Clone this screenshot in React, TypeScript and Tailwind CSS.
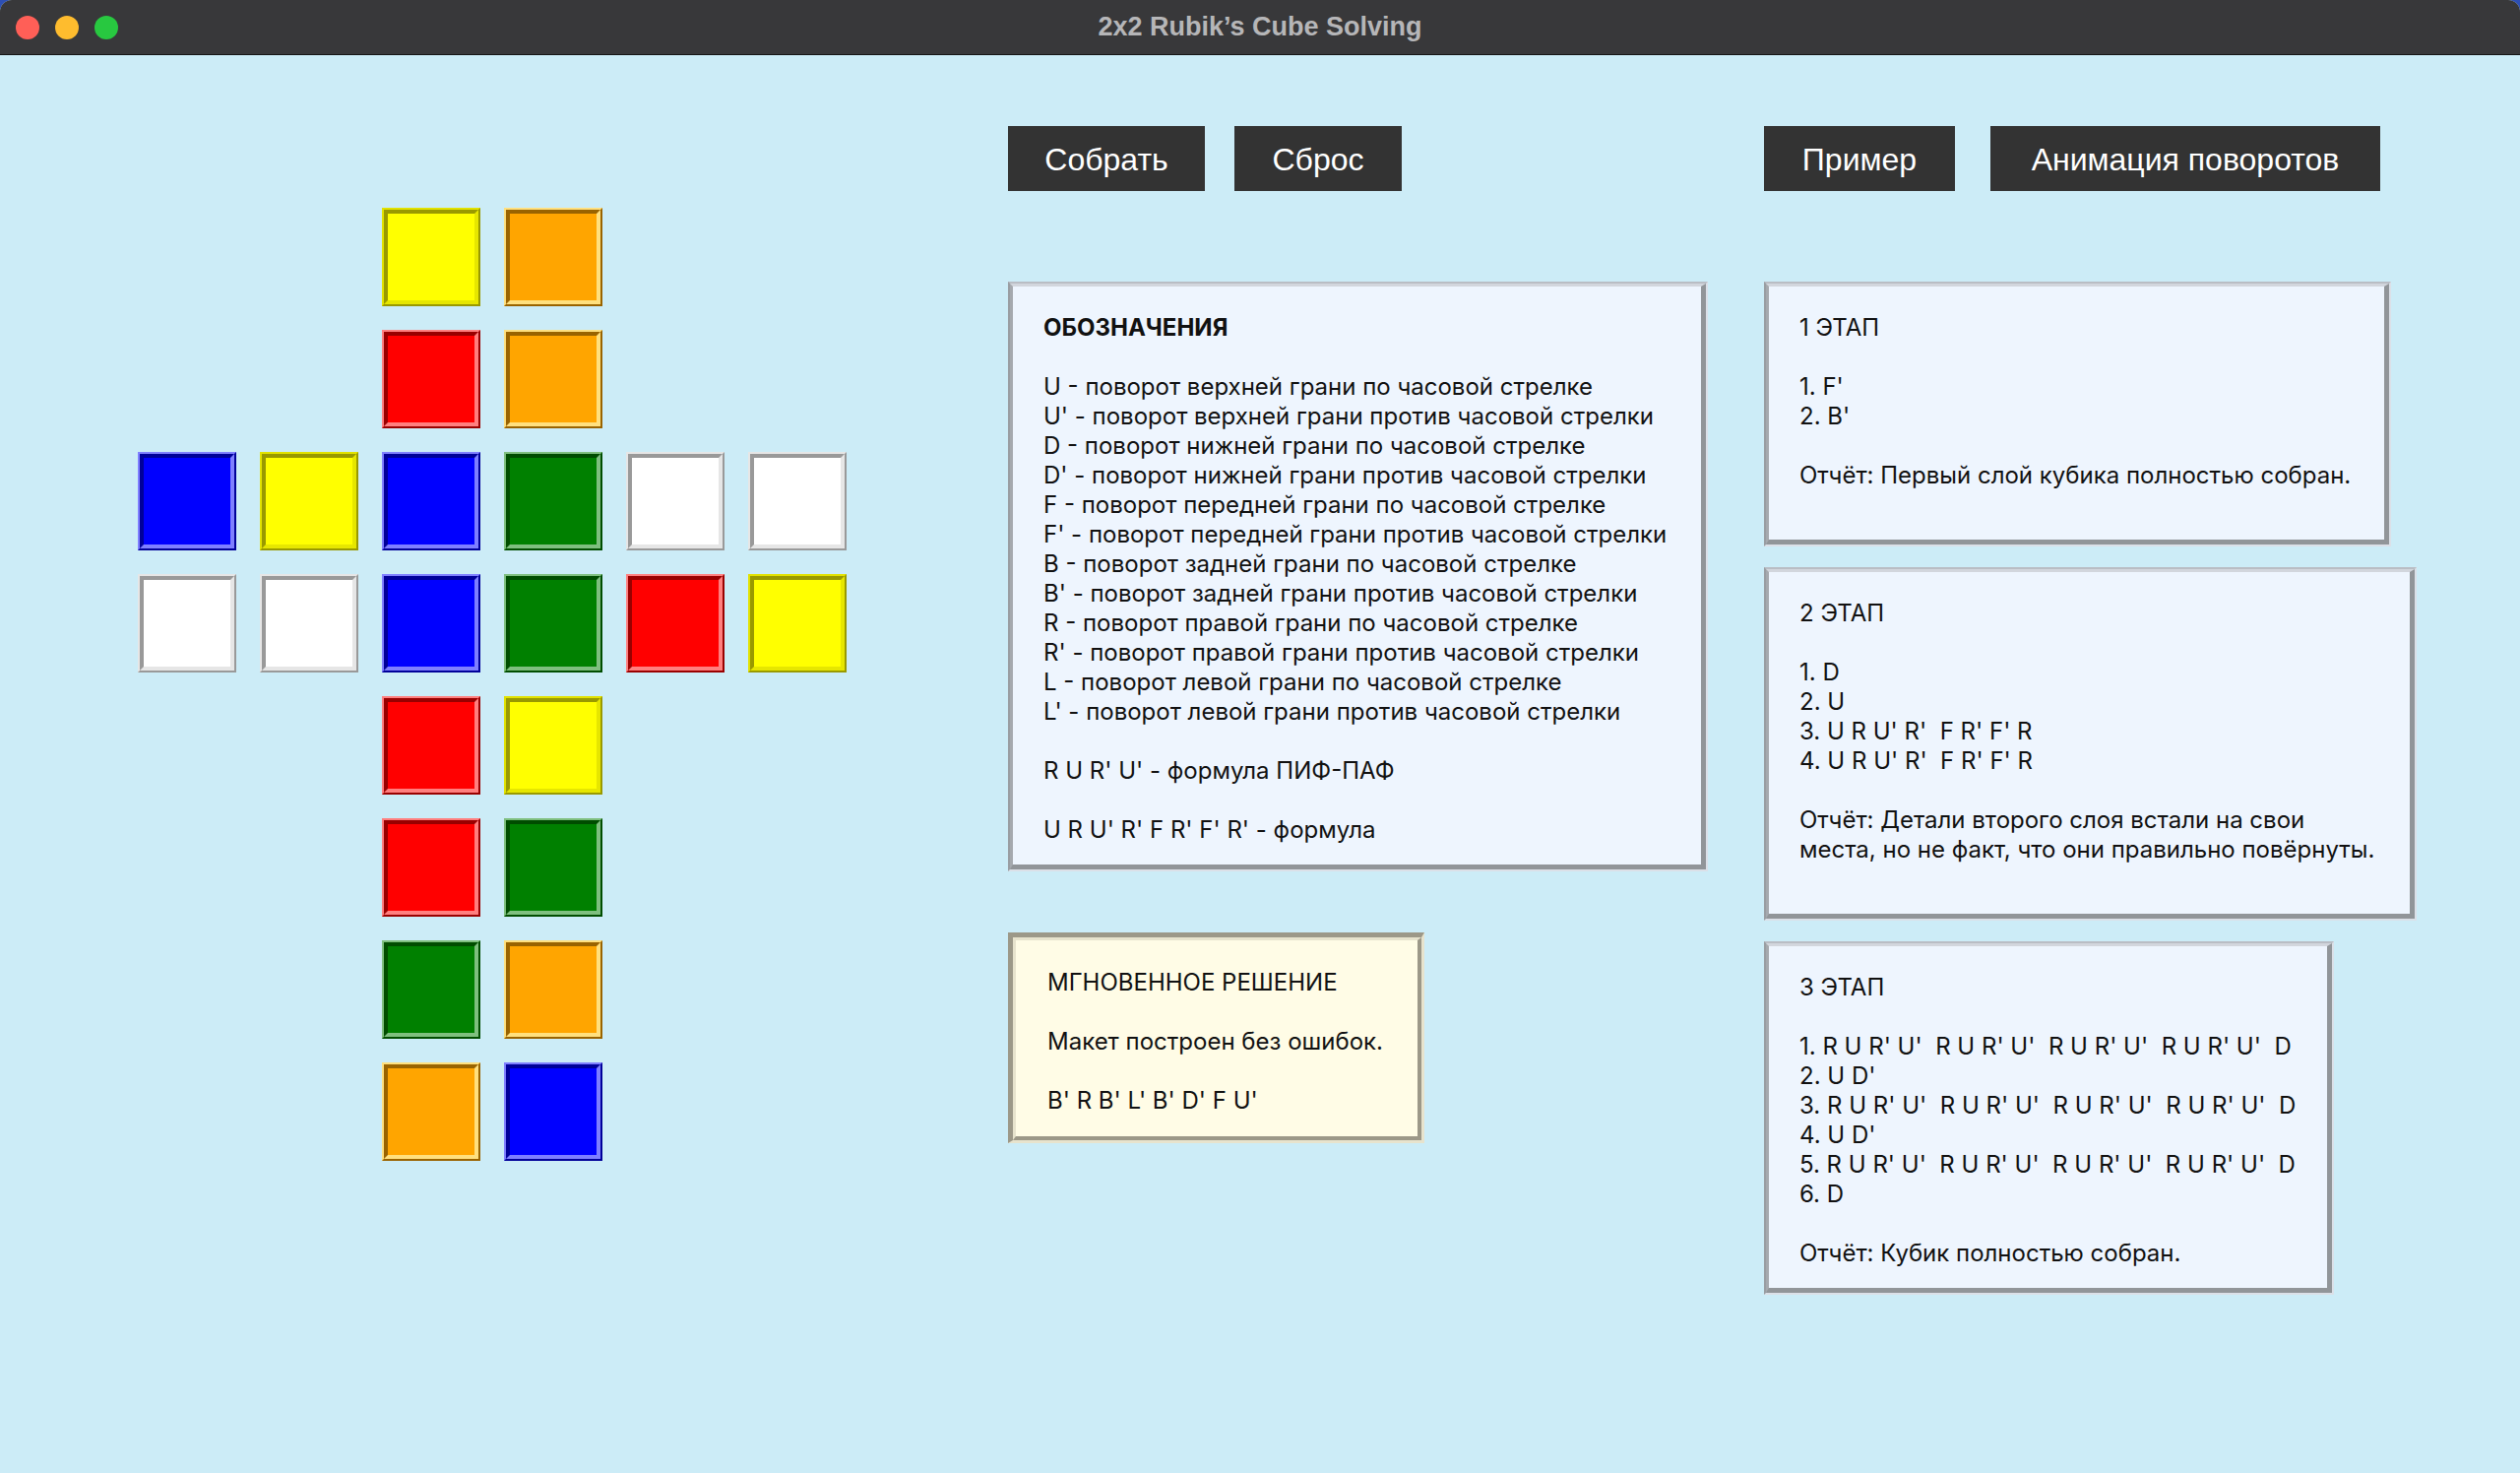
import { FC } from "react";

type Sticker = { outer: string; inner: string };

const STICKERS: Record<string, Sticker> = {
  Y: {
    outer: "border-t-[#e2e200] border-l-[#e2e200] border-r-[#999900] border-b-[#999900]",
    inner: "border-t-[#999900] border-l-[#999900] border-r-[#e6e600] border-b-[#e6e600] bg-[#ffff00]",
  },
  O: {
    outer: "border-t-[#ffe07f] border-l-[#ffe07f] border-r-[#996300] border-b-[#996300]",
    inner: "border-t-[#996300] border-l-[#996300] border-r-[#ffe07f] border-b-[#ffe07f] bg-[#ffa500]",
  },
  R: {
    outer: "border-t-[#ff7f7f] border-l-[#ff7f7f] border-r-[#990000] border-b-[#990000]",
    inner: "border-t-[#990000] border-l-[#990000] border-r-[#ff7f7f] border-b-[#ff7f7f] bg-[#ff0000]",
  },
  B: {
    outer: "border-t-[#7f7fff] border-l-[#7f7fff] border-r-[#000099] border-b-[#000099]",
    inner: "border-t-[#000099] border-l-[#000099] border-r-[#7f7fff] border-b-[#7f7fff] bg-[#0000ff]",
  },
  G: {
    outer: "border-t-[#7fbf7f] border-l-[#7fbf7f] border-r-[#004d00] border-b-[#004d00]",
    inner: "border-t-[#004d00] border-l-[#004d00] border-r-[#7fbf7f] border-b-[#7fbf7f] bg-[#008000]",
  },
  W: {
    outer: "border-t-[#e6e6e6] border-l-[#e6e6e6] border-r-[#999999] border-b-[#999999]",
    inner: "border-t-[#999999] border-l-[#999999] border-r-[#e6e6e6] border-b-[#e6e6e6] bg-[#ffffff]",
  },
};

// развёртка кубика, "." = пусто
const NET = [
  "..YO..",
  "..RO..",
  "BYBGWW",
  "WWBGRY",
  "..RY..",
  "..RG..",
  "..GO..",
  "..OB..",
];

const NOTATION = `U - поворот верхней грани по часовой стрелке
U' - поворот верхней грани против часовой стрелки
D - поворот нижней грани по часовой стрелке
D' - поворот нижней грани против часовой стрелки
F - поворот передней грани по часовой стрелке
F' - поворот передней грани против часовой стрелки
B - поворот задней грани по часовой стрелке
B' - поворот задней грани против часовой стрелки
R - поворот правой грани по часовой стрелке
R' - поворот правой грани против часовой стрелки
L - поворот левой грани по часовой стрелке
L' - поворот левой грани против часовой стрелки

R U R' U' - формула ПИФ-ПАФ

U R U' R' F R' F' R' - формула`;

const STAGE1 = `1 ЭТАП

1. F'
2. B'

Отчёт: Первый слой кубика полностью собран.
 `;

const STAGE2 = `2 ЭТАП

1. D
2. U
3. U R U' R'  F R' F' R
4. U R U' R'  F R' F' R

Отчёт: Детали второго слоя встали на свои
места, но не факт, что они правильно повёрнуты.
 `;

const STAGE3 = `3 ЭТАП

1. R U R' U'  R U R' U'  R U R' U'  R U R' U'  D
2. U D'
3. R U R' U'  R U R' U'  R U R' U'  R U R' U'  D
4. U D'
5. R U R' U'  R U R' U'  R U R' U'  R U R' U'  D
6. D

Отчёт: Кубик полностью собран.`;

const Cell: FC<{ k: string }> = ({ k }) => {
  const s = STICKERS[k];
  if (!s) return <div className="h-[100px] w-[100px]" />;
  return (
    <div className={`h-[100px] w-[100px] border-2 ${s.outer}`}>
      <div className={`h-full w-full border-4 ${s.inner}`} />
    </div>
  );
};

const Btn: FC<{ label: string; w: string }> = ({ label, w }) => (
  <button
    className={`${w} h-[66px] bg-[#333333] pt-[2px] text-white text-[32px] font-['Liberation_Sans',Arial,sans-serif] flex items-center justify-center`}
  >
    {label}
  </button>
);

const InfoPanel: FC<{ w: string; children: React.ReactNode }> = ({ w, children }) => (
  <div
    className={`${w} border-2 border-t-[#b9bdc4] border-l-[#999da2] border-r-[#dbe0e8] border-b-[#dbe0e8]`}
  >
    <div className="border-t-[3px] border-l-[3px] border-r-[5px] border-b-[5px] border-t-[#d2d6dd] border-l-[#a5a9ae] border-r-[#919599] border-b-[#919599] bg-[#eef5fe] pl-[31px] pt-[27px] pb-[20px] text-[24px] leading-[30px] text-[#111111] whitespace-pre font-['Inter',sans-serif]">
      {children}
    </div>
  </div>
);

export default function App() {
  return (
    <div className="h-[1496px] w-[2560px] bg-[#2d4fb4]">
      <div className="flex h-full flex-col overflow-hidden rounded-t-[12px] bg-[#ccecf7]">
        {/* title bar */}
        <div className="relative flex h-[56px] shrink-0 items-center justify-center border-b border-[#151515] bg-[#38383a]">
          <div className="absolute left-[16px] top-[16px] flex gap-[16px]">
            <span className="h-[24px] w-[24px] rounded-full bg-[#ff5f57]" />
            <span className="h-[24px] w-[24px] rounded-full bg-[#febc2e]" />
            <span className="h-[24px] w-[24px] rounded-full bg-[#28c840]" />
          </div>
          <span className="text-[27px] font-bold text-[#b6b6b8] font-['Liberation_Sans',Arial,sans-serif]">
            2x2 Rubik’s Cube Solving
          </span>
        </div>

        <div className="flex flex-1">
          {/* cube net */}
          <div className="w-[1024px] shrink-0 pl-[140px] pt-[155px]">
            <div className="grid w-fit grid-cols-[repeat(6,100px)] gap-[24px]">
              {NET.join("")
                .split("")
                .map((k, i) => (
                  <Cell key={i} k={k} />
                ))}
            </div>
          </div>

          {/* middle column */}
          <div className="w-[768px] shrink-0 pt-[72px]">
            <div className="flex gap-[30px]">
              <Btn label="Собрать" w="w-[200px]" />
              <Btn label="Сброс" w="w-[170px]" />
            </div>
            <div className="mt-[92px]">
              <InfoPanel w="w-[711px]">
                <span className="font-bold">ОБОЗНАЧЕНИЯ</span>
                {"\n\n"}
                {NOTATION}
              </InfoPanel>
            </div>
            <div className="mt-[62px] w-[423px] border-t-[5px] border-l-[5px] border-r-[3px] border-b-[3px] border-t-[#9c9888] border-l-[#9c9888] border-r-[#e7e3cd] border-b-[#e7e3cd]">
              <div className="border-t-[3px] border-l-[3px] border-r-[4px] border-b-[4px] border-t-[#e7e3cd] border-l-[#e7e3cd] border-r-[#9c9888] border-b-[#9c9888] bg-[#fffce6] pl-[32px] pt-[28px] pb-[21px] text-[24px] leading-[30px] text-[#111111] whitespace-pre font-['Inter',sans-serif]">
                {"МГНОВЕННОЕ РЕШЕНИЕ\n\nМакет построен без ошибок.\n\nB' R B' L' B' D' F U'"}
              </div>
            </div>
          </div>

          {/* right column */}
          <div className="flex flex-col pt-[72px]">
            <div className="flex gap-[36px]">
              <Btn label="Пример" w="w-[194px]" />
              <Btn label="Анимация поворотов" w="w-[396px]" />
            </div>
            <div className="mt-[92px] flex flex-col gap-[21px]">
              <InfoPanel w="w-[637px]">{STAGE1}</InfoPanel>
              <InfoPanel w="w-[663px]">{STAGE2}</InfoPanel>
              <InfoPanel w="w-[579px]">{STAGE3}</InfoPanel>
            </div>
          </div>
        </div>
      </div>
    </div>
  );
}
